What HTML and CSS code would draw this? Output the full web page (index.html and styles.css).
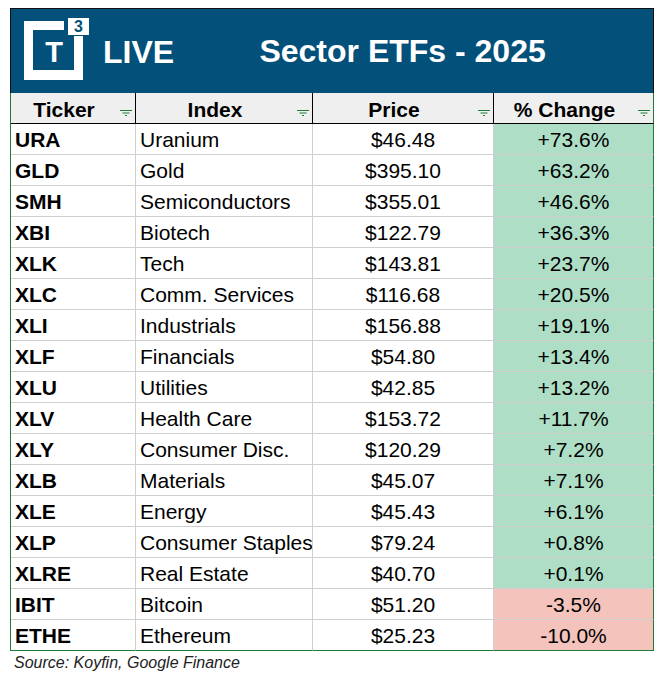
FILE: index.html
```html
<!DOCTYPE html>
<html lang="en">
<head>
<meta charset="utf-8">
<title>Sector ETFs - 2025</title>
<link rel="stylesheet" href="styles.css">
</head>
<body>
<div class="sheet">
  <div class="banner">
    <div class="brand">
      <svg class="logo" width="66" height="62" viewBox="0 0 66 62" aria-label="T3">
        <rect x="0" y="3" width="9" height="59" fill="#fff"/>
        <rect x="0" y="3" width="40" height="9" fill="#fff"/>
        <rect x="50" y="18" width="9" height="44" fill="#fff"/>
        <rect x="0" y="52" width="59" height="10" fill="#fff"/>
        <rect x="44" y="0" width="21" height="17" fill="#fff"/>
        <text x="54.5" y="14" text-anchor="middle" class="logo-sup">3</text>
        <text x="30" y="44" text-anchor="middle" class="logo-t">T</text>
      </svg>
      <span class="live">LIVE</span>
    </div>
    <div class="title">Sector ETFs - 2025</div>
  </div>
  <div class="row head">
    <div class="cell">Ticker<svg class="filter" width="12" height="7" viewBox="0 0 12 7"><path d="M0 0.5H12M2.5 3H9.5M5 5.5H7" stroke="#1f7a36" stroke-width="1"/></svg></div>
    <div class="cell">Index<svg class="filter" width="12" height="7" viewBox="0 0 12 7"><path d="M0 0.5H12M2.5 3H9.5M5 5.5H7" stroke="#1f7a36" stroke-width="1"/></svg></div>
    <div class="cell">Price<svg class="filter" width="12" height="7" viewBox="0 0 12 7"><path d="M0 0.5H12M2.5 3H9.5M5 5.5H7" stroke="#1f7a36" stroke-width="1"/></svg></div>
    <div class="cell">% Change<svg class="filter" width="12" height="7" viewBox="0 0 12 7"><path d="M0 0.5H12M2.5 3H9.5M5 5.5H7" stroke="#1f7a36" stroke-width="1"/></svg></div>
  </div>
  <div class="row"><div class="cell tk">URA</div><div class="cell ix">Uranium</div><div class="cell pr">$46.48</div><div class="cell ch up">+73.6%</div></div>
  <div class="row"><div class="cell tk">GLD</div><div class="cell ix">Gold</div><div class="cell pr">$395.10</div><div class="cell ch up">+63.2%</div></div>
  <div class="row"><div class="cell tk">SMH</div><div class="cell ix">Semiconductors</div><div class="cell pr">$355.01</div><div class="cell ch up">+46.6%</div></div>
  <div class="row"><div class="cell tk">XBI</div><div class="cell ix">Biotech</div><div class="cell pr">$122.79</div><div class="cell ch up">+36.3%</div></div>
  <div class="row"><div class="cell tk">XLK</div><div class="cell ix">Tech</div><div class="cell pr">$143.81</div><div class="cell ch up">+23.7%</div></div>
  <div class="row"><div class="cell tk">XLC</div><div class="cell ix">Comm. Services</div><div class="cell pr">$116.68</div><div class="cell ch up">+20.5%</div></div>
  <div class="row"><div class="cell tk">XLI</div><div class="cell ix">Industrials</div><div class="cell pr">$156.88</div><div class="cell ch up">+19.1%</div></div>
  <div class="row"><div class="cell tk">XLF</div><div class="cell ix">Financials</div><div class="cell pr">$54.80</div><div class="cell ch up">+13.4%</div></div>
  <div class="row"><div class="cell tk">XLU</div><div class="cell ix">Utilities</div><div class="cell pr">$42.85</div><div class="cell ch up">+13.2%</div></div>
  <div class="row"><div class="cell tk">XLV</div><div class="cell ix">Health Care</div><div class="cell pr">$153.72</div><div class="cell ch up">+11.7%</div></div>
  <div class="row"><div class="cell tk">XLY</div><div class="cell ix">Consumer Disc.</div><div class="cell pr">$120.29</div><div class="cell ch up">+7.2%</div></div>
  <div class="row"><div class="cell tk">XLB</div><div class="cell ix">Materials</div><div class="cell pr">$45.07</div><div class="cell ch up">+7.1%</div></div>
  <div class="row"><div class="cell tk">XLE</div><div class="cell ix">Energy</div><div class="cell pr">$45.43</div><div class="cell ch up">+6.1%</div></div>
  <div class="row"><div class="cell tk">XLP</div><div class="cell ix">Consumer Staples</div><div class="cell pr">$79.24</div><div class="cell ch up">+0.8%</div></div>
  <div class="row"><div class="cell tk">XLRE</div><div class="cell ix">Real Estate</div><div class="cell pr">$40.70</div><div class="cell ch up">+0.1%</div></div>
  <div class="row"><div class="cell tk">IBIT</div><div class="cell ix">Bitcoin</div><div class="cell pr">$51.20</div><div class="cell ch down">-3.5%</div></div>
  <div class="row last"><div class="cell tk">ETHE</div><div class="cell ix">Ethereum</div><div class="cell pr">$25.23</div><div class="cell ch down">-10.0%</div></div>
  <p class="source">Source: Koyfin, Google Finance</p>
</div>
</body>
</html>
```

FILE: styles.css
```css
* { box-sizing: border-box; }
body {
  margin: 0;
  background: #fff;
  font-family: "Liberation Sans", Arial, sans-serif;
  color: #000;
}
.sheet {
  width: 644px;
  margin: 8px 0 0 10px;
}
.banner {
  height: 85px;
  background: #03507a;
  border: 1px solid #111;
  border-bottom: 0;
  display: flex;
  align-items: center;
}
.brand {
  display: flex;
  align-items: center;
  margin-left: 13px;
  margin-bottom: 5px;
}
.logo { display: block; }
.logo-sup {
  font: bold 16px "Liberation Sans", Arial, sans-serif;
  fill: #03507a;
}
.logo-t {
  font: bold 29px "Liberation Sans", Arial, sans-serif;
  fill: #fff;
}
.live {
  margin-left: 13px;
  margin-top: 6px;
  color: #fff;
  font-weight: bold;
  font-size: 32px;
  line-height: 1;
}
.title {
  flex: 1;
  text-align: center;
  padding-right: 22px;
  color: #fff;
  font-weight: bold;
  font-size: 32px;
  line-height: 1;
}
.row {
  display: grid;
  grid-template-columns: 125px 177px 181px 160px;
  height: 31px;
  border-left: 1px solid #1f7a36;
}
.cell {
  position: relative;
  height: 31px;
  border-right: 1px solid #cfcfcf;
  border-bottom: 1px solid #cfcfcf;
  font-size: 21px;
  line-height: 32px;
  white-space: nowrap;
  overflow: hidden;
}
.cell:last-child { border-right-color: #1f7a36; }
.head .cell {
  background: #efefef;
  font-weight: bold;
  text-align: center;
  padding-right: 18px;
  line-height: 33px;
  border-right-color: #000;
  border-bottom-color: #000;
}
.head .cell:last-child { border-right-color: #1f7a36; }
.filter {
  position: absolute;
  right: 3px;
  bottom: 6px;
}
.tk { font-weight: bold; padding-left: 4px; }
.ix { padding-left: 4px; }
.pr, .ch { text-align: center; }
.up { background: #afdec7; }
.down { background: #f3c3bc; }
.last .cell { border-bottom-color: #1f7a36; }
.source {
  margin: 3px 0 0 4px;
  font-size: 16px;
  font-style: italic;
  color: #222;
}
```
